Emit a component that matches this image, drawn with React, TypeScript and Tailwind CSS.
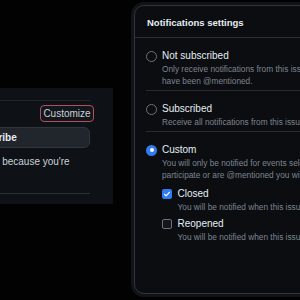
const Radio = ({ checked }: { checked?: boolean }) =>
  checked ? (
    <span className="mt-[1.5px] flex h-[11px] w-[11px] shrink-0 items-center justify-center rounded-full bg-[#2f7cf0]">
      <span className="h-[4px] w-[4px] rounded-full bg-white" />
    </span>
  ) : (
    <span className="mt-[1.5px] h-[11px] w-[11px] shrink-0 rounded-full border border-[#6b727b]" />
  );

const Check = ({ checked }: { checked?: boolean }) =>
  checked ? (
    <span className="mt-[2px] flex h-[10px] w-[10px] shrink-0 items-center justify-center rounded-[2px] bg-[#2f7cf0]">
      <svg viewBox="0 0 16 16" className="h-[8px] w-[8px]" fill="none" stroke="white" strokeWidth="2.2" strokeLinecap="round" strokeLinejoin="round">
        <path d="M3 8.5l3.2 3.2L13 4.5" />
      </svg>
    </span>
  ) : (
    <span className="mt-[2px] h-[10px] w-[10px] shrink-0 rounded-[2px] border border-[#6b727b] bg-[#121519]" />
  );

const Option = ({ title, lines, checked, children, last }: { title: string; lines: string[]; checked?: boolean; children?: React.ReactNode; last?: boolean }) => (
  <div className={"ml-[11px] flex gap-[5px] pt-[11px] pb-[3px] " + (last ? "" : "border-b border-[#262a31]")}>
    <Radio checked={checked} />
    <div className="min-w-0 flex-1">
      <div className="text-[10px] leading-[14px] text-[#e6edf3]">{title}</div>
      {lines.map((l) => (
        <div key={l} className="whitespace-nowrap text-[8.3px] leading-[12px] text-[#7d8590]">{l}</div>
      ))}
      {children}
    </div>
  </div>
);

const SubOption = ({ title, checked }: { title: string; checked?: boolean }) => (
  <div className="flex gap-[5.5px]">
    <Check checked={checked} />
    <div>
      <div className="text-[10px] leading-[14px] text-[#e6edf3]">{title}</div>
      <div className="whitespace-nowrap text-[8.3px] leading-[12px] text-[#7d8590]">You will be notified when this issue is {title.toLowerCase()}</div>
    </div>
  </div>
);

export default function App() {
  return (
    <div className="flex h-[300px] w-[300px] overflow-hidden bg-[#020202] [font-family:'Liberation_Sans',Arial,sans-serif]">
      <div className="mt-[88px] h-[116px] w-[113px] shrink-0 overflow-hidden bg-[#0e1115]">
        <div className="-ml-[127px] w-[217px]">
          <div className="h-[13px] border-b border-[#23272d]" />
          <div className="mt-[4px] flex justify-end">
            <button className="-mr-[4px] flex h-[17px] w-[54px] items-center justify-center rounded-[4px] border border-[#b0505a] bg-[#13161b] text-[10px] text-[#c9d1d9]">
              Customize
            </button>
          </div>
          <button className="mt-[5px] flex h-[21px] w-full items-center justify-center rounded-[6px] border border-[#30363d] bg-[#21262d] pl-[10px] text-[10px] font-bold text-[#e6edf3]">
            Unsubscribe
          </button>
          <div className="mt-[8px] whitespace-nowrap text-[10px] leading-[12px] text-[#c9d1d9]">
            You’re receiving notifications because you're
          </div>
          <div className="mt-[25px] border-t border-[#2a2f36]" />
        </div>
      </div>
      <div className="ml-[21px] mt-[5px] h-[289px] w-[200px] shrink-0 rounded-[10px] border border-[#30353d] bg-[#0b0d11] shadow-[0_0_0_3px_#111316]">
        <div className="flex h-[32px] items-center border-b border-[#2b3038] px-[12px] pt-[3px] text-[9.5px] font-bold text-[#e6edf3]">
          Notifications settings
        </div>
        <Option title="Not subscribed" lines={["Only receive notifications from this issue when you", "have been @mentioned."]} />
        <Option title="Subscribed" lines={["Receive all notifications from this issue."]} />
        <Option
          checked
          last
          title="Custom"
          lines={["You will only be notified for events selected below, even if you", "participate or are @mentioned you will not be notified."]}
        >
          <div className="mt-[6px] flex flex-col gap-[4px]">
            <SubOption title="Closed" checked />
            <SubOption title="Reopened" />
          </div>
        </Option>
      </div>
    </div>
  );
}
